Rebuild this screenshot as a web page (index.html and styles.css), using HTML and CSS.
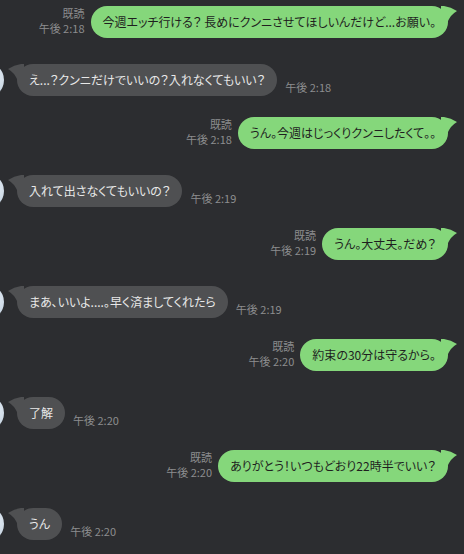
FILE: index.html
```html
<!DOCTYPE html>
<html lang="ja">
<head>
  <meta charset="UTF-8"/>
  <title>トーク</title>
  <link rel="stylesheet" href="styles.css">
</head>
<body>

  <!-- Chat log -->
  <div class="chat-log">

    <div class="row out">
      <div class="meta"><span>既読</span><span>午後 2:18</span></div>
      <div class="bubble out-bubble">今週エッチ行ける？ 長めにクンニさせてほしいんだけど...お願い。<svg class="tail" viewBox="0 0 17 18"><path d="M0 0 H3 Q10 1 16 5 Q10 8 6 17 H0 Z"/></svg></div>
    </div>

    <div class="row in">
      <div class="avatar"></div>
      <div class="bubble in-bubble">え...？クンニだけでいいの？入れなくてもいい？<svg class="tail" viewBox="0 0 17 18"><path d="M0 0 H3 Q10 1 16 5 Q10 8 6 17 H0 Z"/></svg></div>
      <div class="time">午後 2:18</div>
    </div>

    <div class="row out">
      <div class="meta"><span>既読</span><span>午後 2:18</span></div>
      <div class="bubble out-bubble">うん。今週はじっくりクンニしたくて。。<svg class="tail" viewBox="0 0 17 18"><path d="M0 0 H3 Q10 1 16 5 Q10 8 6 17 H0 Z"/></svg></div>
    </div>

    <div class="row in">
      <div class="avatar"></div>
      <div class="bubble in-bubble">入れて出さなくてもいいの？<svg class="tail" viewBox="0 0 17 18"><path d="M0 0 H3 Q10 1 16 5 Q10 8 6 17 H0 Z"/></svg></div>
      <div class="time">午後 2:19</div>
    </div>

    <div class="row out">
      <div class="meta"><span>既読</span><span>午後 2:19</span></div>
      <div class="bubble out-bubble">うん。大丈夫。だめ？<svg class="tail" viewBox="0 0 17 18"><path d="M0 0 H3 Q10 1 16 5 Q10 8 6 17 H0 Z"/></svg></div>
    </div>

    <div class="row in">
      <div class="avatar"></div>
      <div class="bubble in-bubble">まあ、いいよ....。早く済ましてくれたら<svg class="tail" viewBox="0 0 17 18"><path d="M0 0 H3 Q10 1 16 5 Q10 8 6 17 H0 Z"/></svg></div>
      <div class="time">午後 2:19</div>
    </div>

    <div class="row out">
      <div class="meta"><span>既読</span><span>午後 2:20</span></div>
      <div class="bubble out-bubble">約束の30分は守るから。<svg class="tail" viewBox="0 0 17 18"><path d="M0 0 H3 Q10 1 16 5 Q10 8 6 17 H0 Z"/></svg></div>
    </div>

    <div class="row in">
      <div class="avatar"></div>
      <div class="bubble in-bubble">了解<svg class="tail" viewBox="0 0 17 18"><path d="M0 0 H3 Q10 1 16 5 Q10 8 6 17 H0 Z"/></svg></div>
      <div class="time">午後 2:20</div>
    </div>

    <div class="row out">
      <div class="meta"><span>既読</span><span>午後 2:20</span></div>
      <div class="bubble out-bubble">ありがとう！いつもどおり22時半でいい？<svg class="tail" viewBox="0 0 17 18"><path d="M0 0 H3 Q10 1 16 5 Q10 8 6 17 H0 Z"/></svg></div>
    </div>

    <div class="row in">
      <div class="avatar"></div>
      <div class="bubble in-bubble">うん<svg class="tail" viewBox="0 0 17 18"><path d="M0 0 H3 Q10 1 16 5 Q10 8 6 17 H0 Z"/></svg></div>
      <div class="time">午後 2:20</div>
    </div>

  </div>

</body>
</html>
```

FILE: styles.css
```css
/**********************************************
 *  Dark chat theme
 **********************************************/
body {
  margin: 0;
  background-color: #2c2d30;
  font-family: "Noto Sans CJK JP", "Noto Sans", sans-serif;
  font-feature-settings: "palt";
  overflow: hidden;
}

.chat-log {
  padding: 6px 16px 0 0;
}

/**********************************************
 *  Rows
 **********************************************/
.row {
  display: flex;
  align-items: flex-end;
}

.row.out {
  justify-content: flex-end;
  margin-top: 21px;
}

.row.out:first-child {
  margin-top: 0;
}

.row.in {
  margin-top: 26px;
}

/**********************************************
 *  Bubbles
 **********************************************/
.bubble {
  position: relative;
  height: 32px;
  line-height: 32px;
  padding: 0 12px;
  border-radius: 16px;
  font-size: 12px;
  white-space: nowrap;
}

.out-bubble {
  background-color: #85d77b;
  color: #1f1f1f;
}

.in-bubble {
  background-color: #4f5052;
  color: #e8e8e8;
}

.tail {
  position: absolute;
  top: 0;
  width: 17px;
  height: 18px;
}

.out-bubble .tail {
  right: -10px;
  fill: #85d77b;
}

.in-bubble .tail {
  left: -10px;
  fill: #4f5052;
  transform: scaleX(-1);
}

/**********************************************
 *  Meta / time
 **********************************************/
.meta {
  display: flex;
  flex-direction: column;
  align-items: flex-end;
  margin: 0 6px 2px 0;
  font-size: 11px;
  line-height: 15px;
  color: #8d8d8f;
}

.time {
  margin: 0 0 2px 8px;
  font-size: 11px;
  line-height: 13px;
  color: #8d8d8f;
}

.avatar {
  align-self: flex-start;
  flex-shrink: 0;
  width: 36px;
  height: 36px;
  margin: -2px 13px -2px -32px;
  border-radius: 50%;
  background: radial-gradient(circle at 70% 40%, #e4ecf4 0%, #c3d1df 60%, #aebfd0 100%);
}
```
